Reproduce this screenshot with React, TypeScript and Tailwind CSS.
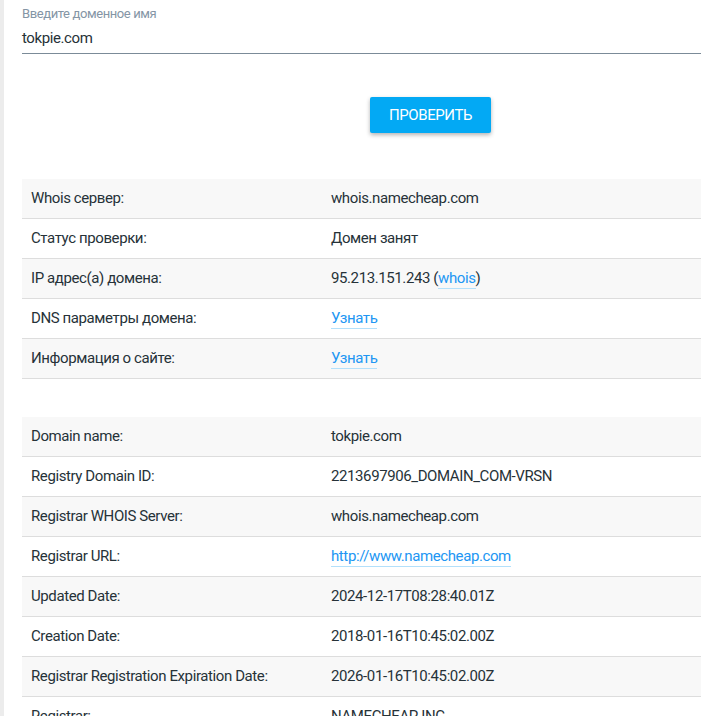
import React from "react";

type Row = { label: string; value: React.ReactNode };

const Link: React.FC<{ children: React.ReactNode }> = ({ children }) => (
  <a href="#" className="text-[#2196f3] border-b border-[#b3e0fb] pb-[1px]">
    {children}
  </a>
);

const checkRows: Row[] = [
  { label: "Whois сервер:", value: "whois.namecheap.com" },
  { label: "Статус проверки:", value: "Домен занят" },
  {
    label: "IP адрес(а) домена:",
    value: (
      <>
        95.213.151.243 (<Link>whois</Link>)
      </>
    ),
  },
  { label: "DNS параметры домена:", value: <Link>Узнать</Link> },
  { label: "Информация о сайте:", value: <Link>Узнать</Link> },
];

const whoisRows: Row[] = [
  { label: "Domain name:", value: "tokpie.com" },
  { label: "Registry Domain ID:", value: "2213697906_DOMAIN_COM-VRSN" },
  { label: "Registrar WHOIS Server:", value: "whois.namecheap.com" },
  { label: "Registrar URL:", value: <Link>http://www.namecheap.com</Link> },
  { label: "Updated Date:", value: "2024-12-17T08:28:40.01Z" },
  { label: "Creation Date:", value: "2018-01-16T10:45:02.00Z" },
  { label: "Registrar Registration Expiration Date:", value: "2026-01-16T10:45:02.00Z" },
  { label: "Registrar:", value: "NAMECHEAP INC" },
];

const Table: React.FC<{ rows: Row[] }> = ({ rows }) => (
  <div className="flex flex-col">
    {rows.map((r, i) => (
      <div
        key={r.label}
        className={`flex h-[40px] items-center border-b border-[#dddddd] ${
          i % 2 === 0 ? "bg-[#f8f8f8]" : "bg-white"
        }`}
      >
        <div className="w-[299px] pl-[9px]">{r.label}</div>
        <div className="flex-1 pl-[10px]">{r.value}</div>
      </div>
    ))}
  </div>
);

export default function App() {
  return (
    <div
      className="min-h-screen bg-white border-l-[4px] border-[#ececec] text-[#263238] text-[15px] tracking-[-0.4px]"
      style={{ fontFamily: "Roboto, 'Liberation Sans', sans-serif" }}
    >
      <div className="pl-[18px]">
        {/* Domain input */}
        <div className="pt-[5px]">
          <div className="text-[13px] text-[#8495a5] leading-[18px]">
            Введите доменное имя
          </div>
          <div className="mt-[6px] pb-[6px] border-b border-[#7b8b98] text-[15px] leading-[18px]">
            tokpie.com
          </div>
        </div>

        {/* Button */}
        <div className="pl-[348px] pt-[43px]">
          <button className="w-[121px] h-[36px] bg-[#03a9f4] text-white text-[15px] rounded-[2px] shadow-[0_2px_4px_rgba(0,0,0,0.3)]">
            ПРОВЕРИТЬ
          </button>
        </div>

        <div className="mt-[46px]">
          <Table rows={checkRows} />
        </div>
        <div className="mt-[38px]">
          <Table rows={whoisRows} />
        </div>
      </div>
    </div>
  );
}
